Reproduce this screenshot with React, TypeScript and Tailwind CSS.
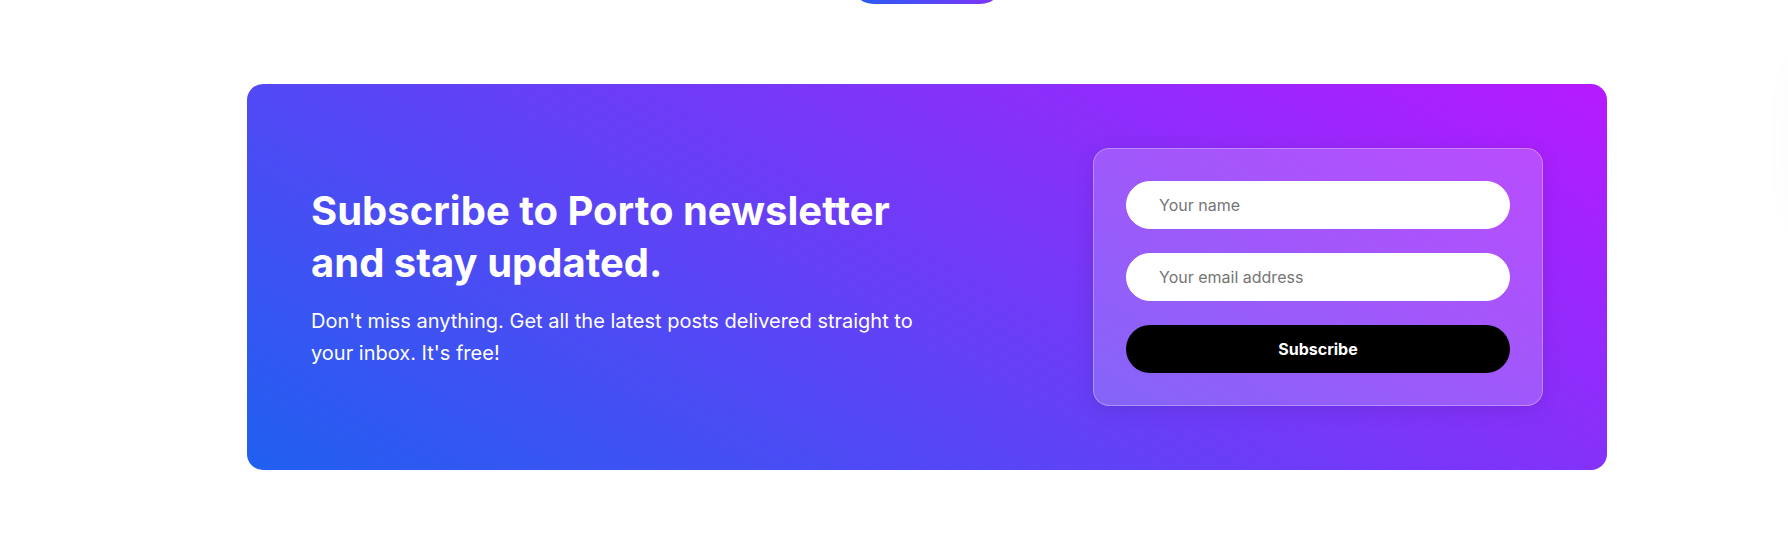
export default function App() {
  return (
    <div className="relative min-h-screen overflow-hidden bg-white pb-20 pl-[66px] font-['Inter',sans-serif]">
      {/* Soft shadow of the panel docked past the right edge */}
      <div
        aria-hidden="true"
        className="absolute top-16 -right-[174px] h-[156px] w-40 rounded-xl shadow-[0_0_50px_rgba(0,0,0,0.04)]"
      />

      <div className="-mt-11 flex justify-center">
        <button
          type="button"
          aria-label="More posts"
          className="h-12 w-[154px] rounded-full bg-[linear-gradient(30deg,#2060f0,#b61aff)]"
        />
      </div>

      <main className="mx-auto mt-20 max-w-[1360px]">
        <section className="flex flex-wrap items-center justify-between gap-8 rounded-2xl bg-[linear-gradient(30deg,#2060f0,#b61aff)] p-16 text-white">
          <div className="max-w-[620px]">
            <h2 className="text-[40px] leading-[52px] font-bold [font-variant-ligatures:none]">
              Subscribe to Porto newsletter and stay updated.
            </h2>
            <p className="mt-4 text-xl leading-8">
              Don't miss anything. Get all the latest posts delivered straight to your inbox. It's free!
            </p>
          </div>

          <form
            className="flex w-full max-w-[450px] flex-col gap-6 rounded-2xl border border-white/30 bg-white/20 p-8 shadow-[0_4px_20px_rgba(0,0,0,0.1)]"
            onSubmit={(event) => event.preventDefault()}
          >
            <input
              type="text"
              name="name"
              aria-label="Your name"
              placeholder="Your name"
              className="h-12 rounded-full border border-white bg-white px-8 text-base text-black placeholder:text-[#757575]"
            />
            <input
              type="email"
              name="email"
              aria-label="Your email address"
              placeholder="Your email address"
              className="h-12 rounded-full border border-white bg-white px-8 text-base text-black placeholder:text-[#757575]"
            />
            <button type="submit" className="h-12 rounded-full bg-black text-base font-bold text-white">
              Subscribe
            </button>
          </form>
        </section>
      </main>
    </div>
  );
}
